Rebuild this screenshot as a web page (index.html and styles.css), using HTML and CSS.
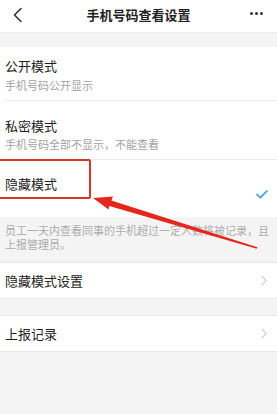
FILE: index.html
```html
<!DOCTYPE html>
<html lang="zh-CN">
<head>
<meta charset="utf-8">
<link rel="stylesheet" href="styles.css">
</head>
<body>
<div class="page">
  <header class="nav">
    <svg class="back" width="12" height="16" viewBox="0 0 12 16"><path d="M9 1.5 L2.5 8 L9 14.5" fill="none" stroke="#333" stroke-width="1.6" stroke-linecap="round" stroke-linejoin="round"/></svg>
    <div class="nav-title">手机号码查看设置</div>
    <div class="more"><span></span><span></span><span></span></div>
  </header>
  <div class="gap top-gap"></div>
  <section class="group">
    <div class="opt opt-1">
      <div class="opt-title">公开模式</div>
      <div class="opt-sub">手机号码公开显示</div>
    </div>
    <div class="opt opt-2">
      <div class="opt-title">私密模式</div>
      <div class="opt-sub">手机号码全部不显示，不能查看</div>
    </div>
    <div class="opt opt-3">
      <div class="opt-title">隐藏模式</div>
      <svg class="check" width="12" height="9" viewBox="0 0 12 9"><path d="M1 4.5 L4.3 7.6 L11 1" fill="none" stroke="#3d9be0" stroke-width="1.7" stroke-linecap="round" stroke-linejoin="round"/></svg>
    </div>
  </section>
  <p class="desc">员工一天内查看同事的手机超过一定人数将被记录，且上报管理员。</p>
  <div class="row">
    <span>隐藏模式设置</span>
    <svg class="chev" width="6" height="11" viewBox="0 0 6 11"><path d="M0.8 0.8 L5 5.5 L0.8 10.2" fill="none" stroke="#c8c8c8" stroke-width="1.1"/></svg>
  </div>
  <div class="gap mid-gap"></div>
  <div class="row">
    <span>上报记录</span>
    <svg class="chev" width="6" height="11" viewBox="0 0 6 11"><path d="M0.8 0.8 L5 5.5 L0.8 10.2" fill="none" stroke="#c8c8c8" stroke-width="1.1"/></svg>
  </div>
  <div class="highlight"></div>
  <svg class="arrow" width="277" height="414" viewBox="0 0 277 414"><polygon points="93,198 113,196.5 111.4,200.6 257.3,247.2 256.7,248.8 109.2,206 108.5,209.5" fill="#e4261c"/></svg>
</div>
</body>
</html>
```
FILE: styles.css
```css
* { box-sizing: border-box; margin: 0; padding: 0; }
html, body { width: 277px; height: 414px; overflow: hidden; }
body {
  background: #f4f4f4;
  font-family: "Noto Sans CJK SC", "Noto Sans", sans-serif;
  color: #222;
}
.page { position: relative; width: 277px; height: 414px; }
.nav {
  height: 32px;
  background: #fff;
  display: flex;
  align-items: center;
  justify-content: space-between;
  padding: 0 14px 2px 12px;
  position: relative;
}
.back { display: block; }
.nav-title {
  position: absolute;
  left: 0; right: 0; top: 6px;
  text-align: center;
  font-size: 13px;
  line-height: 17px;
  font-weight: 700;
  color: #222;
}
.more { display: flex; gap: 2px; margin-bottom: 3px; }
.more span { width: 3px; height: 3px; border-radius: 50%; background: #333; display: block; }
.gap.top-gap { height: 15px; border-top: 1px solid #ececec; }
.group { background: #fff; }
.opt { position: relative; }
.opt-title { font-size: 13px; line-height: 16px; padding-left: 5px; }
.opt-sub { font-size: 11px; line-height: 14px; color: #a3a3a3; padding-left: 5px; }
.opt-1 { height: 54px; padding-top: 11px; }
.opt-1 .opt-sub { margin-top: 4px; }
.opt-2 { height: 59px; padding-top: 17px; }
.opt-2 .opt-sub { margin-top: 3px; }
.opt-1::after, .opt-2::after {
  content: ""; position: absolute; left: 5px; right: 0; bottom: 0; height: 1px; background: #ebebeb;
}
.opt-3 { height: 57px; padding-top: 16px; }
.check { position: absolute; right: 9px; top: 30px; }
.desc {
  height: 46px;
  padding: 6px 2px 0 5px;
  font-size: 11px;
  line-height: 14px;
  color: #acacac;
  border-bottom: 1px solid #e6e6e6;
}
.row {
  height: 36px;
  background: #fff;
  display: flex;
  align-items: center;
  justify-content: space-between;
  padding: 0 10px 0 5px;
  font-size: 13px;
  color: #222;
  border-bottom: 1px solid #e8e8e8;
}
.gap.mid-gap { height: 17px; border-bottom: 1px solid #e8e8e8; }
.chev { display: block; }
.highlight {
  position: absolute;
  left: -2px; top: 159px;
  width: 93px; height: 40px;
  border: 2px solid #d8342c;
  border-radius: 2px;
}
.arrow { position: absolute; left: 0; top: 0; pointer-events: none; }
```
